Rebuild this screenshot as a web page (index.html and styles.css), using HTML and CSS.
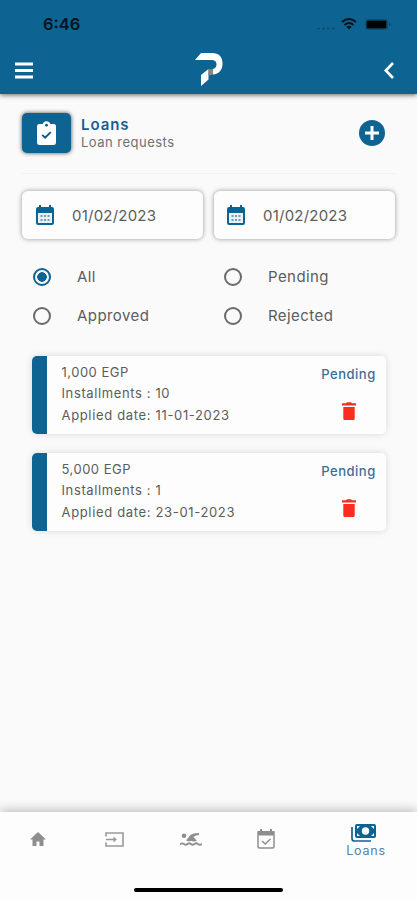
FILE: index.html
```html
<!DOCTYPE html>
<html lang="en">
<head>
<meta charset="utf-8">
<title>Loans</title>
<link rel="stylesheet" href="styles.css">
</head>
<body>
<svg class="defs" width="0" height="0" aria-hidden="true">
  <symbol id="calendar" viewBox="0 0 18 20">
    <path fill="#0d6493" d="M2 2H3V0H5V2H13V0H15V2H16Q18 2 18 4V18Q18 20 16 20H2Q0 20 0 18V4Q0 2 2 2Z"/>
    <path fill="#e9f1f5" d="M2 8H16V18H2Z"/>
    <path stroke="#6f9bb8" stroke-width="2" stroke-dasharray="2 1.5" d="M4.500 11H14.500M4.500 15H14.500"/>
  </symbol>
  <symbol id="trash" viewBox="0 0 14 18">
    <path fill="#fa2d20" d="M1.300 5H12.700V16.500Q12.700 18 11.200 18H2.800Q1.300 18 1.300 16.500ZM0 1.300H4L5 .3H9L10 1.300H14V3.500H0Z"/>
  </symbol>
</svg>
<div class="app">
  <header class="top">
    <div class="status">
      <span class="time">6:46</span>
      <div class="signals">
        <svg class="dots" width="19" height="3" viewBox="0 0 19 3"><path stroke="#0a4d70" stroke-width="1.600" stroke-dasharray="3 2" d="M1 1.5H19"/></svg>
        <svg class="wifi" width="16" height="12" viewBox="0 0 16 12"><path fill="none" stroke="#06141d" stroke-width="2" d="M1 4Q8-2 15 4M3.500 7Q8 3 12.500 7"/><path fill="#06141d" d="M5.300 8.700Q8 6.700 10.700 8.700L8 11.500Z"/></svg>
        <svg width="26" height="11" viewBox="0 0 26 11"><rect x=".5" y=".5" width="22" height="10" rx="2" fill="none" stroke="#0a527a"/><rect x="1.500" y="1.500" width="20" height="8" rx="1" fill="#020507"/><path fill="#084565" d="M24 3.500Q27 5.500 24 7.500Z"/></svg>
      </div>
    </div>
    <div class="bar">
      <svg width="18" height="17" viewBox="0 0 18 17"><path stroke="#fff" stroke-width="3" d="M0 2H18M0 8.500H18M0 15H18"/></svg>
      <svg class="logo" width="28" height="34" viewBox="0 0 28 34"><path fill="#fff" d="M6 0H17C24 0 27.500 4 27.500 10.500C27.500 17 24 21 18 21.500V16C20.500 15.500 21.500 13.500 21.500 11.500C21.500 8.500 20 7 16 7H0Z"/><path fill="#fff" d="M6 22L13.500 16V26.500L6 33Z"/><path fill="#8d8378" d="M13.500 16H18V21.500L13.500 22.500Z"/></svg>
      <svg width="10" height="17" viewBox="0 0 10 17"><path fill="none" stroke="#fff" stroke-width="2.600" d="M9 1L1.800 8.500L9 16"/></svg>
    </div>
  </header>

  <main>
    <section class="heading">
      <div class="tile"><svg width="19" height="24" viewBox="0 0 20 25"><path fill="#fff" d="M2.500 3H6Q7 0 10 0T14 3H17.500Q20 3 20 5.500V22Q20 25 17.500 25H2.500Q0 25 0 22V5.500Q0 3 2.500 3Z"/><circle cx="10" cy="4.300" r="1.500" fill="#0d6493"/><path fill="none" stroke="#0d5590" stroke-width="2" d="M5.500 14.500L8.500 17.500L14.500 11.500"/></svg></div>
      <div class="titles"><h1>Loans</h1><p>Loan requests</p></div>
      <svg class="add" width="26" height="26" viewBox="0 0 26 26"><circle cx="13" cy="13" r="13" fill="#0d6493"/><path stroke="#fff" stroke-width="3" d="M6 13H20M13 6V20"/></svg>
    </section>

    <section class="dates">
      <div class="date"><svg width="18" height="20"><use href="#calendar"/></svg><span>01/02/2023</span></div>
      <div class="date"><svg width="18" height="20"><use href="#calendar"/></svg><span>01/02/2023</span></div>
    </section>

    <section class="filters">
      <div class="option on"><i></i><span>All</span></div>
      <div class="option"><i></i><span>Pending</span></div>
      <div class="option"><i></i><span>Approved</span></div>
      <div class="option"><i></i><span>Rejected</span></div>
    </section>

    <section class="loans">
      <article class="loan">
        <div class="info"><p>1,000 EGP</p><p class="count">Installments : 10</p><p class="applied">Applied date: 11-01-2023</p></div>
        <div class="state"><span>Pending</span><svg width="14" height="18"><use href="#trash"/></svg></div>
      </article>
      <article class="loan">
        <div class="info"><p>5,000 EGP</p><p class="count">Installments : 1</p><p class="applied">Applied date: 23-01-2023</p></div>
        <div class="state"><span>Pending</span><svg width="14" height="18"><use href="#trash"/></svg></div>
      </article>
    </section>
  </main>

  <footer>
    <nav>
      <div class="tab"><svg width="16" height="14" viewBox="0 0 16 14"><path fill="#8e8e8e" d="M8 0L16 7.500H13.500V14H9.500V9.500H6.500V14H2.500V7.500H0Z"/></svg></div>
      <div class="tab"><svg width="19" height="15" viewBox="0 0 19 15"><path fill="none" stroke="#999" stroke-width="1.600" d="M1 4.500V1H18V14H1V10.500M1 7.500H10.500"/><path fill="#999" d="M8.500 4.500L11.800 7.500L8.500 10.500Z"/></svg></div>
      <div class="tab"><svg width="22" height="14" viewBox="0 0 22 14"><circle cx="4" cy="3.700" r="2.300" fill="#8e8e8e"/><path fill="#8e8e8e" d="M6 8.500L10.500 3Q13 1 19 1V3Q15.500 3 13.500 5L17 9Q13 10 11 8.700Q9 10 6 8.500Z"/><path fill="none" stroke="#8e8e8e" stroke-width="1.800" d="M0 12.500Q2 10.500 4 12Q5.800 13.500 7.500 12Q9.300 10.500 11 12Q12.800 13.500 14.500 12Q16.300 10.500 18 12Q20 13.500 22 12"/></svg></div>
      <div class="tab"><svg width="18" height="20" viewBox="0 0 18 20"><path fill="none" stroke="#8e8e8e" stroke-width="1.500" d="M1 3H17V17.500Q17 19 15.500 19H2.500Q1 19 1 17.500ZM5 12L8.200 15L13.500 10"/><path fill="#8e8e8e" d="M1 2H3V0H5V2H13V0H15V2H17V6.500H1Z"/></svg></div>
      <div class="tab active"><svg width="25" height="18" viewBox="0 0 25 18"><path fill="none" stroke="#0d6493" stroke-width="1.700" d="M1 3V14.500Q1 17 3.500 17H20"/><rect x="4" y="0" width="21" height="14" rx="2" fill="#0d6493"/><circle cx="14.500" cy="7" r="3.700" fill="#fff"/><path fill="#fff" d="M6 2H9L6 5ZM23 2H20L23 5ZM6 12H9L6 9ZM23 12H20L23 9Z"/></svg><span>Loans</span></div>
    </nav>
    <div class="home-bar"></div>
  </footer>
</div>
</body>
</html>
```
FILE: styles.css
```css
* { box-sizing: border-box; }
body { margin: 0; background: #fafafa; color: #5c5c5c; font-family: Inter, "Liberation Sans", sans-serif; }
svg { display: block; flex: none; }
.defs { position: absolute; }
h1, p { margin: 0; }
.app { height: 900px; display: flex; flex-direction: column; overflow: hidden; }

.top { height: 94px; flex: none; background: #0d6493; box-shadow: 0 1px 5px rgba(0, 0, 0, .6); }
.status { height: 47px; padding: 1px 26px 0 43px; display: flex; justify-content: space-between; align-items: center; }
.time { color: #06141d; font-size: 16.5px; font-weight: 600; line-height: 20px; }
.signals { display: flex; align-items: center; }
.dots { margin: 9px 6px 0 0; }
.wifi { margin-right: 8px; }
.bar { height: 46px; padding: 0 23px 0 15px; display: flex; justify-content: space-between; align-items: center; }
.logo { margin: 0; }

main { flex: 1; padding: 17px 22px 0; }
.heading { height: 63px; display: flex; align-items: flex-start; border-bottom: 1px solid #f2f2f2; padding-top: 2px; }
.tile { width: 49px; height: 40px; border-radius: 5px; background: #0d6493; display: flex; align-items: center; justify-content: center; box-shadow: 0 0 4px rgba(0, 0, 0, .7); }
.titles { margin: 2px 0 0 10px; flex: 1; }
h1 { font-size: 15px; line-height: 19px; font-weight: 600; letter-spacing: .95px; color: #195f8e; }
.titles p { font-size: 13px; line-height: 16px; letter-spacing: .48px; color: #707070; }
.add { margin: 7px 10px 0 0; }

.dates { display: grid; grid-template-columns: 181px 181px; gap: 11px; margin-top: 17px; }
.date { height: 48px; border-radius: 6px; background: #fdfdfd; box-shadow: 0 0 5px rgba(0, 0, 0, .4); padding-left: 14px; display: flex; align-items: center; gap: 18px; font-size: 15px; letter-spacing: .22px; }
.date:last-child { padding-left: 13px; }

.filters { display: grid; grid-template-columns: 191px 1fr; grid-auto-rows: 39px; margin: 18px 0 0 11px; }
.option { display: flex; align-items: center; gap: 26px; font-size: 15px; letter-spacing: .43px; }
.option i { width: 18px; height: 18px; border: 2px solid #6a6a6a; border-radius: 50%; }
.option.on i { border-color: #0d6493; background: radial-gradient(circle, #0d6493 4.5px, transparent 5px); }

.loans { display: grid; gap: 19px; margin: 21px 9px 0 10px; }
.loan { height: 78px; border-left: 15px solid #0d6493; border-radius: 5px; background: #fdfdfd; box-shadow: 0 0 7px rgba(0, 0, 0, .14); display: flex; justify-content: space-between; padding: 5.500px 10px 0 14.500px; }
.info { font-size: 13px; line-height: 21.5px; letter-spacing: .5px; }
.count { letter-spacing: .62px; }
.applied { letter-spacing: .66px; }
.state { width: 55px; display: flex; flex-direction: column; align-items: center; font-size: 13px; font-weight: 500; line-height: 20px; letter-spacing: .5px; color: #3d6e93; padding-top: 2.500px; gap: 18px; }

footer { height: 88px; flex: none; background: #fdfdfd; box-shadow: 0 -2px 10px rgba(0, 0, 0, .25); }
nav { height: 76px; display: grid; grid-template-columns: 76px 76px 77px 73px 1fr; padding-bottom: 22px; }
.tab { display: flex; align-items: center; justify-content: center; }
.tab.active { flex-direction: column; padding: 6px 0 0 13px; font-size: 12.5px; line-height: 18px; letter-spacing: .8px; color: #5483a3; }
.tab.active svg { margin-left: -6px; }
.home-bar { width: 149px; height: 4px; border-radius: 2px; background: #000; margin: 0 auto; }
```
